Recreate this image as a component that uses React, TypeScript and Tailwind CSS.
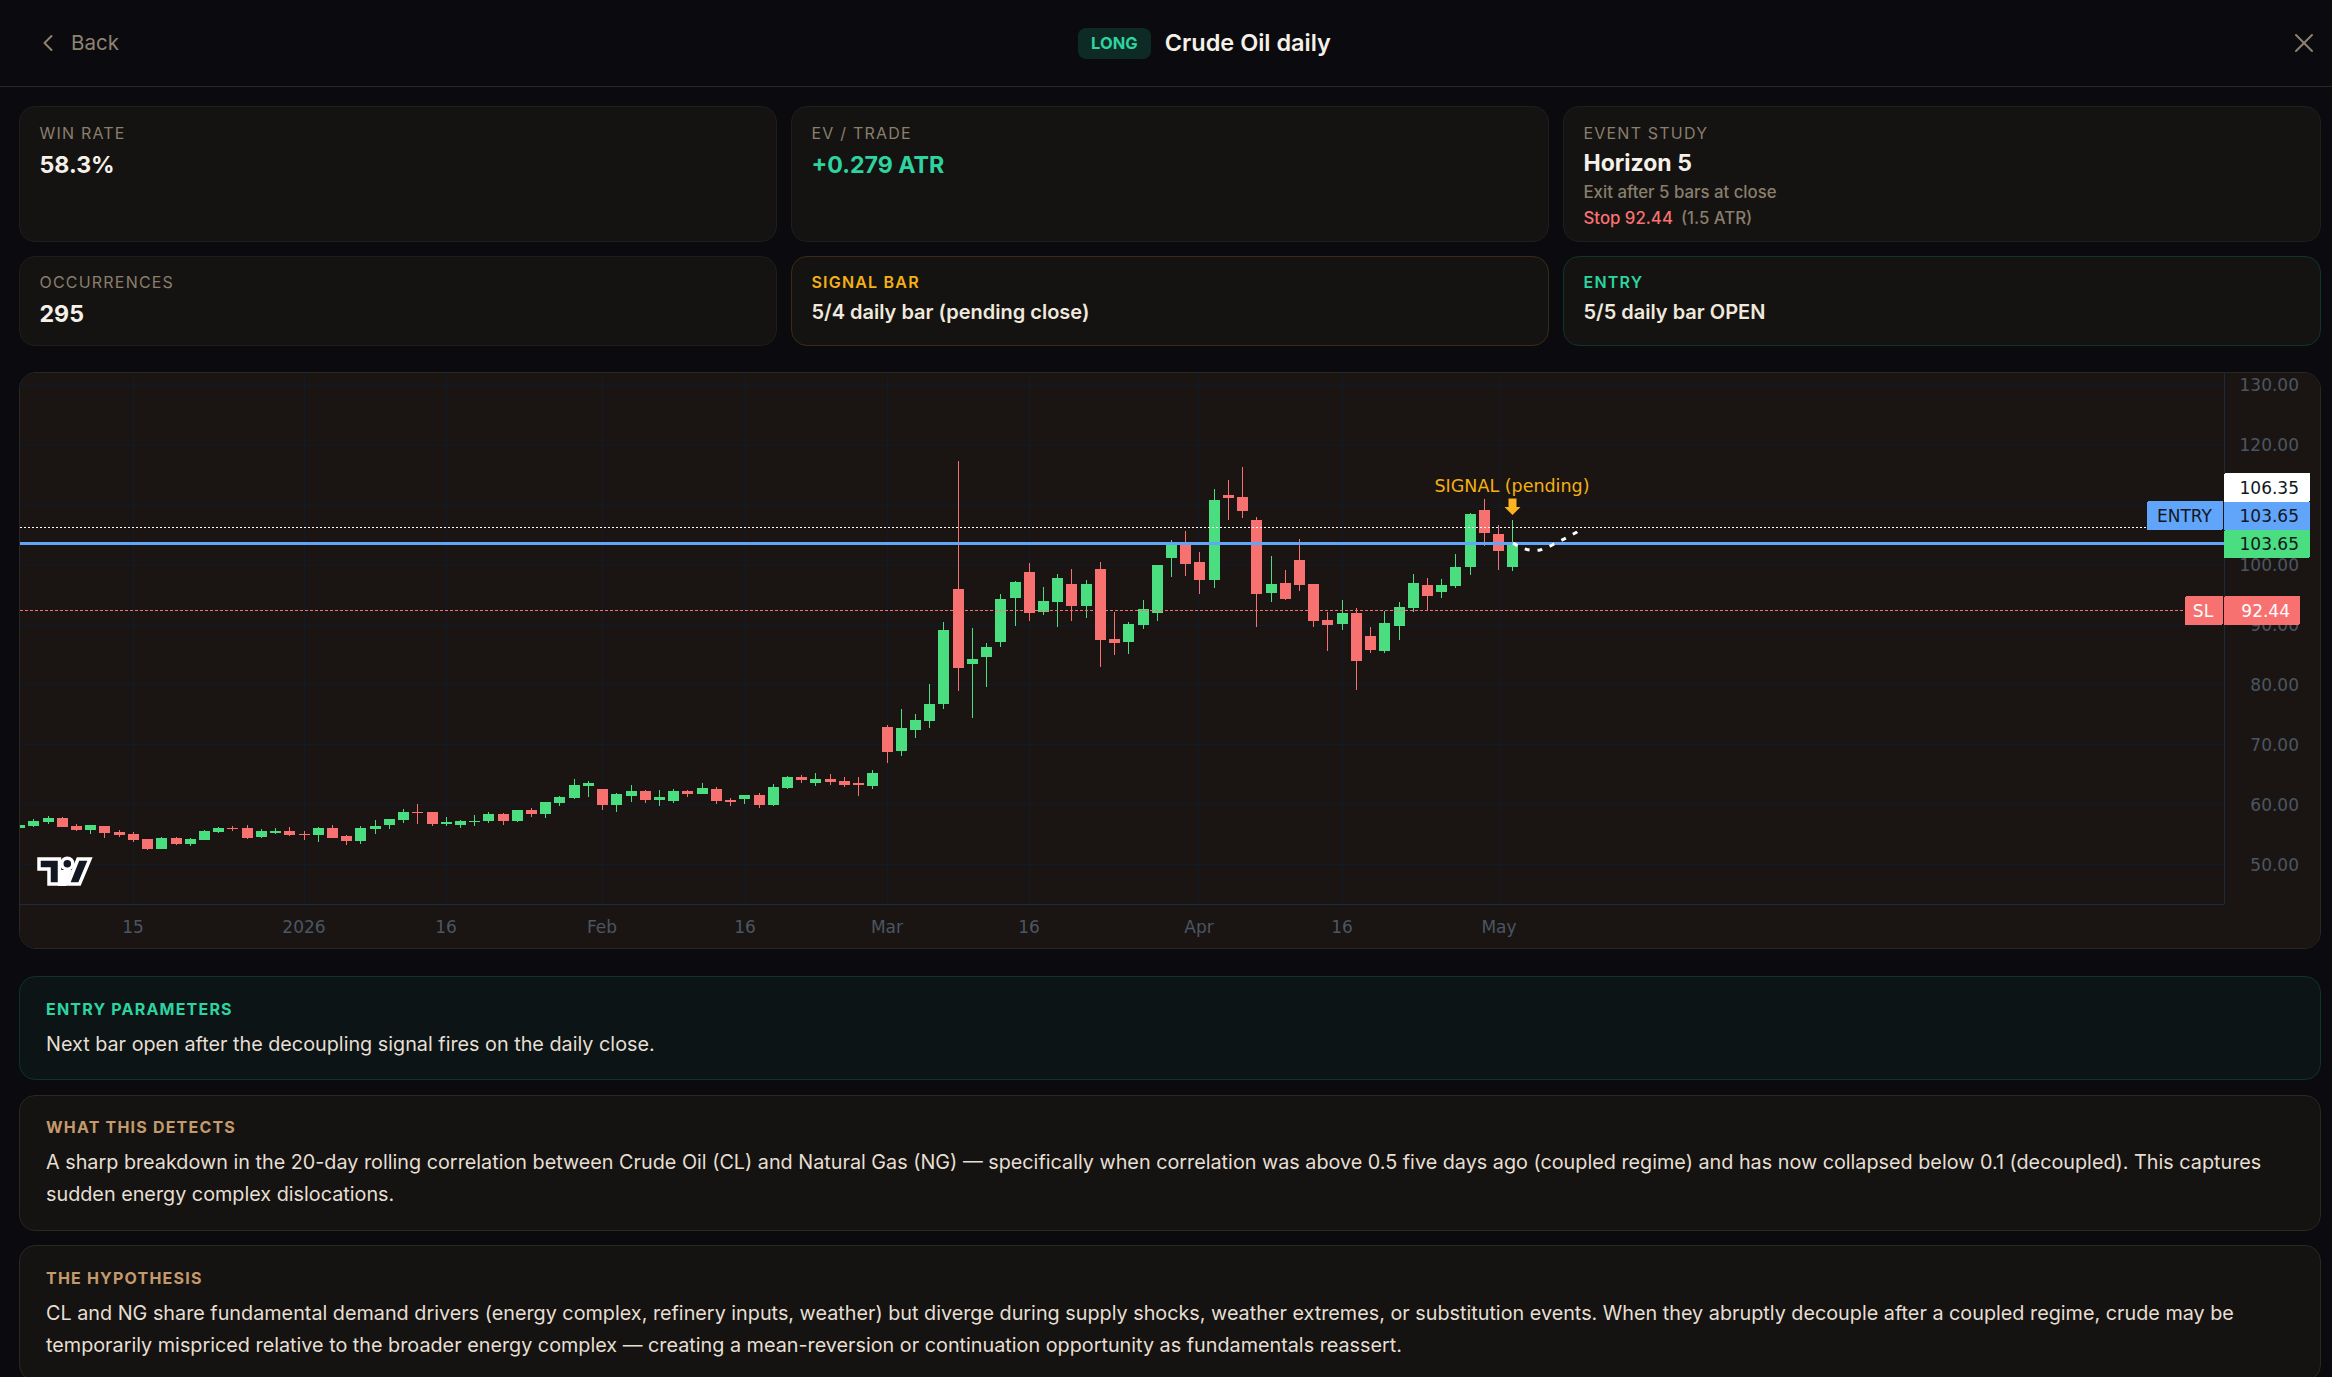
import React from "react";
import { ChevronLeft, X } from "lucide-react";

type C = [string, number, number, number, number];

const groupA: C[] = [
  ["g",315,315,324,324],["g",297,303,318,321],["g",288,294,306,312],["r",291,294,321,321],["r",312,318,330,333],
  ["g",315,315,330,342],["r",318,318,339,354],["r",330,336,345,351],["r",336,342,360,366],["r",357,357,387,390],
  ["g",351,354,387,387],["r",351,354,372,375],["g",354,357,372,378],["g",330,333,360,360],["g",321,324,336,339],
  ["r",318,324,327,333],["r",315,324,354,357],["g",327,333,351,354],["g",324,333,339,342],["r",321,333,345,348],
  ["r",333,342,345,360],["g",321,324,345,366],["r",315,324,354,354],["r",345,348,363,375],["g",318,324,363,372],
  ["g",300,318,327,342],["g",297,297,315,327],["g",267,276,300,309],["r",252,276,279,312],["r",276,276,312,318],
  ["g",291,306,312,318],["g",300,303,315,324],["g",285,302,305,318],["g",276,282,303,309],
];
const groupB: C[] = [
  ["r",399,402,423,435],["g",390,390,423,426],["r",384,390,402,411],["g",366,366,402,414],["g",348,351,369,378],
  ["g",297,315,354,357],["g",303,309,318,351],["r",327,327,375,390],["g",339,342,375,396],["g",315,333,348,366],
  ["r",330,333,360,369],["g",330,351,360,378],["g",327,333,363,369],["r",330,333,342,351],["g",309,324,342,342],
  ["r",321,327,363,372],["r",354,360,366,378],["g",345,345,357,372],["r",339,345,375,384],["g",312,321,375,378],
  ["g",288,291,324,327],["r",285,291,300,309],["g",279,297,309,318],["r",282,297,306,315],["r",291,303,315,321],
  ["r",291,309,315,348],["g",270,279,318,327],
];
const groupC: C[] = [
  ["r",855,861,936,969],["g",807,864,933,948],["g",822,840,870,894],["g",732,792,843,864],["g",546,570,792,807],
  ["r",63,447,684,753],["g",564,657,672,834],["g",609,621,651,741],["g",462,477,606,621],["g",423,426,474,558],
  ["r",369,396,519,543],["g",441,483,516,525],["g",402,414,486,561],["r",387,432,498,543],["g",420,432,498,534],
  ["r",366,387,600,681],["r",516,597,609,645],["g",546,552,606,642],["g",480,507,555,567],["g",375,375,519,543],
  ["g",300,306,354,411],["r",273,306,372,408],["r",336,366,420,462],["g",147,180,420,444],["r",120,165,174,240],
  ["r",81,171,213,234],["r",231,240,462,561],["g",348,432,459,486],["r",390,429,477,480],["r",297,360,435,453],
  ["r",432,432,543,561],["r",516,540,555,633],["g",480,519,552,570],["r",504,519,663,750],["r",561,588,630,639],
  ["g",513,549,633,639],["g",486,501,558,600],["g",402,429,504,516],["r",414,435,468,510],["g",417,435,456,474],
  ["g",342,381,438,444],["g",219,222,381,405],["r",177,210,279,318],["r",255,282,333,390],["g",240,309,381,393],
];

const toReal = (list: C[], base: number): C[] =>
  list.map(([c, a, b, d, e]) => [c, base + a / 3, base + b / 3, base + d / 3, base + e / 3]);

const candles: C[] = [...toReal(groupA, 720), ...toReal(groupB, 680), ...toReal(groupC, 440)];

const hGrid = [385.5, 445.5, 505.5, 565.5, 625.5, 684.5, 744.5, 804.5, 864.5];
const vGrid = [133.5, 304.5, 446.5, 602.5, 745.5, 887.5, 1029.5, 1198.5, 1342.5, 1499.5];
const times: [string, number][] = [
  ["15", 133], ["2026", 304], ["16", 446], ["Feb", 602], ["16", 745], ["Mar", 887],
  ["16", 1029], ["Apr", 1199], ["16", 1342], ["May", 1499],
];
const prices: [string, number][] = [
  ["130.00", 385], ["120.00", 445], ["100.00", 565], ["90.00", 625], ["80.00", 685],
  ["70.00", 745], ["60.00", 805], ["50.00", 865],
];

const chartFont = "'DejaVu Sans', sans-serif";

function Tag({ x, y, w, h, fill, text, tx, color, anchor = "end", rx = "" }: {
  x: number; y: number; w: number; h: number; fill: string; text: string; tx: number; color: string; anchor?: "end" | "middle"; rx?: string;
}) {
  return (
    <g>
      <rect x={x} y={y} width={w} height={h} fill={fill} rx={rx ? 2 : 0} shapeRendering="crispEdges" />
      <text x={tx} y={y + h / 2 + 6} fontSize={17} fill={color} textAnchor={anchor} fontFamily={chartFont}>{text}</text>
    </g>
  );
}

function Chart() {
  return (
    <svg className="block w-full h-full" viewBox="20 373 2300 575" preserveAspectRatio="none">
      <rect x="20" y="373" width="2300" height="575" fill="#1a1512" />
      <g shapeRendering="crispEdges" stroke="#111a2b" strokeWidth="1">
        {hGrid.map((y) => <line key={y} x1="20" x2="2224" y1={y} y2={y} />)}
        {vGrid.map((x) => <line key={x} x1={x} x2={x} y1="373" y2="904" />)}
      </g>
      <g shapeRendering="crispEdges" stroke="#1e2a3a" strokeWidth="1">
        <line x1="20" x2="2224" y1="904.5" y2="904.5" />
        <line x1="2224.5" x2="2224.5" y1="373" y2="904" />
      </g>
      <g shapeRendering="crispEdges">
        {candles.map(([c, wt, bt, bb, wb], i) => {
          const cx = 19.1 + 14.221 * i;
          const left = Math.round(cx - 5);
          const fill = c === "g" ? "#4ade80" : "#f87171";
          return (
            <g key={i} fill={fill}>
              <rect x={left + 5} y={wt} width="1" height={wb - wt} />
              <rect x={left} y={bt} width="11" height={Math.max(bb - bt, 1)} />
            </g>
          );
        })}
      </g>
      <g shapeRendering="crispEdges">
        <line x1="20" x2="2147" y1="527.5" y2="527.5" stroke="#ffffff" strokeWidth="1" strokeDasharray="2 2" />
        <line x1="20" x2="2185" y1="610.5" y2="610.5" stroke="#f87171" strokeWidth="1" strokeDasharray="3 2" />
        <rect x="20" y="542" width="2204" height="3" fill="#60a5fa" />
      </g>
      <path d="M1513 543 Q1521 548 1527 549.5 Q1534 551 1540 550 Q1547 548 1554 544 L1566 538 L1577 532 L1583 527.5" fill="none" stroke="#ffffff" strokeWidth="3" strokeDasharray="5 8" />

      <text x="1512" y="492" fontSize="17.5" fill="#f5b014" textAnchor="middle" fontFamily={chartFont}>SIGNAL (pending)</text>
      <polygon points="1508.5,498.5 1516.5,498.5 1516.5,507 1520.5,507 1512.5,515 1504.5,507 1508.5,507" fill="#fbb31f" />

      {prices.map(([t, y]) => (
        <text key={t} x="2299" y={y + 6} fontSize="17" fill="#4b5563" textAnchor="end" fontFamily={chartFont}>{t}</text>
      ))}
      {times.map(([t, x]) => (
        <text key={t + x} x={x} y="933" fontSize="17" fill="#4b5563" textAnchor="middle" fontFamily={chartFont}>{t}</text>
      ))}

      <Tag x={2224} y={473} w={86} h={29} fill="#ffffff" text="106.35" tx={2299} color="#131722" rx="1" />
      <Tag x={2147} y={501} w={76} h={29} fill="#60a5fa" text="ENTRY" tx={2184.5} color="#131722" anchor="middle" rx="1" />
      <Tag x={2224} y={502} w={86} h={28} fill="#60a5fa" text="103.65" tx={2299} color="#131722" />
      <Tag x={2224} y={530} w={86} h={28} fill="#4ade80" text="103.65" tx={2299} color="#131722" rx="1" />
      <Tag x={2185} y={596} w={38} h={29} fill="#f87171" text="SL" tx={2203} color="#ffffff" anchor="middle" rx="1" />
      <Tag x={2224} y={596} w={76} h={29} fill="#f87171" text="92.44" tx={2290} color="#ffffff" rx="1" />

      <polygon points="58,870 72,870 66,886 58,886" fill="#ffffff" />
      <g fill="#131722" stroke="#ffffff" strokeWidth="3.5">
        <polygon points="39,859 59.5,859 59.5,884 49,884 49,869 39,869" />
        <polygon points="78,859 90,859 79.5,884 68,884" />
        <circle cx="67.3" cy="863.7" r="5.5" />
      </g>
    </svg>
  );
}

function Stat({ label, value, valueClass = "text-[#f5f0e8]" }: { label: string; value: string; valueClass?: string }) {
  return (
    <div className="rounded-[16px] border border-[#201e1b] bg-[#141311] px-[19.5px] pt-[16px]">
      <div className="text-[16px] leading-[20px] tracking-[1.2px] text-[#8a7e6c]">{label}</div>
      <div className={`mt-[6px] text-[23.2px] leading-[32px] font-bold ${valueClass}`}>{value}</div>
    </div>
  );
}

function Note({ label, value, border, labelClass }: { label: string; value: string; border: string; labelClass: string }) {
  return (
    <div className={`rounded-[16px] border bg-[#141311] px-[19.5px] pt-[15px] h-[90px] ${border}`}>
      <div className={`text-[16px] leading-[20px] tracking-[1.2px] font-semibold ${labelClass}`}>{label}</div>
      <div className="mt-[4.5px] text-[20px] leading-[30px] font-semibold text-[#f0e9dd]">{value}</div>
    </div>
  );
}

function Section({ label, labelClass, box, children }: { label: string; labelClass: string; box: string; children: React.ReactNode }) {
  return (
    <section className={`rounded-[16px] border px-[26px] pt-[20.5px] pb-[19.5px] ${box}`}>
      <div className={`text-[16px] leading-[22px] tracking-[1.2px] font-bold ${labelClass}`}>{label}</div>
      <p className="mt-[8px] text-[19.8px] leading-[32px] text-[#e6dfd3]">{children}</p>
    </section>
  );
}

export default function App() {
  return (
    <div className="h-[1377px] overflow-hidden bg-[#0a0a0f] font-['Inter',sans-serif]">
      <header className="h-[87px] border-b border-[#2c271f] flex items-center justify-between pl-[34px] pr-[12px]">
        <div className="w-[205px] flex items-center gap-[9px] text-[#8f8370]">
          <ChevronLeft size={28} strokeWidth={1.7} />
          <span className="text-[20.5px]">Back</span>
        </div>
        <div className="flex items-center gap-[14px] mr-[118px]">
          <span className="h-[31px] px-[13px] flex items-center rounded-[8px] bg-[#0d2b24] text-[16.5px] font-bold text-[#2dd4a0]">LONG</span>
          <span className="text-[23.5px] font-semibold text-[#f5f0e8]">Crude Oil daily</span>
        </div>
        <X size={32} strokeWidth={1.5} className="text-[#8f8370]" />
      </header>

      <main className="pl-[19px] pt-[19px] pr-[11px]">
        <div className="grid grid-cols-3 gap-[14px]">
          <Stat label="WIN RATE" value="58.3%" />
          <Stat label="EV / TRADE" value="+0.279 ATR" valueClass="text-[#2dd4a0]" />
          <div className="h-[136px] rounded-[16px] border border-[#201e1b] bg-[#141311] px-[19.5px] pt-[16px]">
            <div className="text-[16px] leading-[20px] tracking-[1.2px] text-[#8a7e6c]">EVENT STUDY</div>
            <div className="mt-[4px] text-[23px] leading-[32px] font-bold text-[#f5f0e8]">Horizon 5</div>
            <div className="mt-[1px] text-[16.8px] leading-[24px] font-medium text-[#8a7e6c]">Exit after 5 bars at close</div>
            <div className="mt-[2px] text-[16.8px] leading-[24px] font-medium text-[#8a7e6c]">
              <span className="text-[#f87171]">Stop 92.44</span>
              <span className="ml-[8px]">(1.5 ATR)</span>
            </div>
          </div>
          <div className="h-[90px] rounded-[16px] border border-[#201e1b] bg-[#141311] px-[19.5px] pt-[15px]">
            <div className="text-[16px] leading-[20px] tracking-[1.2px] text-[#8a7e6c]">OCCURRENCES</div>
            <div className="mt-[6px] text-[23.2px] leading-[32px] font-bold text-[#f5f0e8]">295</div>
          </div>
          <Note label="SIGNAL BAR" value="5/4 daily bar (pending close)" border="border-[#3a2c14]" labelClass="text-[#f5b014]" />
          <Note label="ENTRY" value="5/5 daily bar OPEN" border="border-[#123329]" labelClass="text-[#2dd4a0]" />
        </div>

        <div className="mt-[26px] h-[577px] rounded-[17px] border border-[#2a2825] overflow-hidden">
          <Chart />
        </div>

        <div className="mt-[27px] flex flex-col gap-[14.5px]">
          <Section label="ENTRY PARAMETERS" labelClass="text-[#2dd4a0]" box="border-[#0f3329] bg-[#0c1416]">
            Next bar open after the decoupling signal fires on the daily close.
          </Section>
          <Section label="WHAT THIS DETECTS" labelClass="text-[#c49a6c]" box="border-[#2c271f] bg-[#141311]">
            A sharp breakdown in the 20-day rolling correlation between Crude Oil (CL) and Natural Gas (NG) — specifically when correlation was above 0.5 five days ago (coupled regime) and has now collapsed below 0.1 (decoupled). This captures sudden energy complex dislocations.
          </Section>
          <Section label="THE HYPOTHESIS" labelClass="text-[#c49a6c]" box="border-[#2c271f] bg-[#141311]">
            CL and NG share fundamental demand drivers (energy complex, refinery inputs, weather) but diverge during supply shocks, weather extremes, or substitution events. When they abruptly decouple after a coupled regime, crude may be temporarily mispriced relative to the broader energy complex — creating a mean-reversion or continuation opportunity as fundamentals reassert.
          </Section>
        </div>
      </main>
    </div>
  );
}
